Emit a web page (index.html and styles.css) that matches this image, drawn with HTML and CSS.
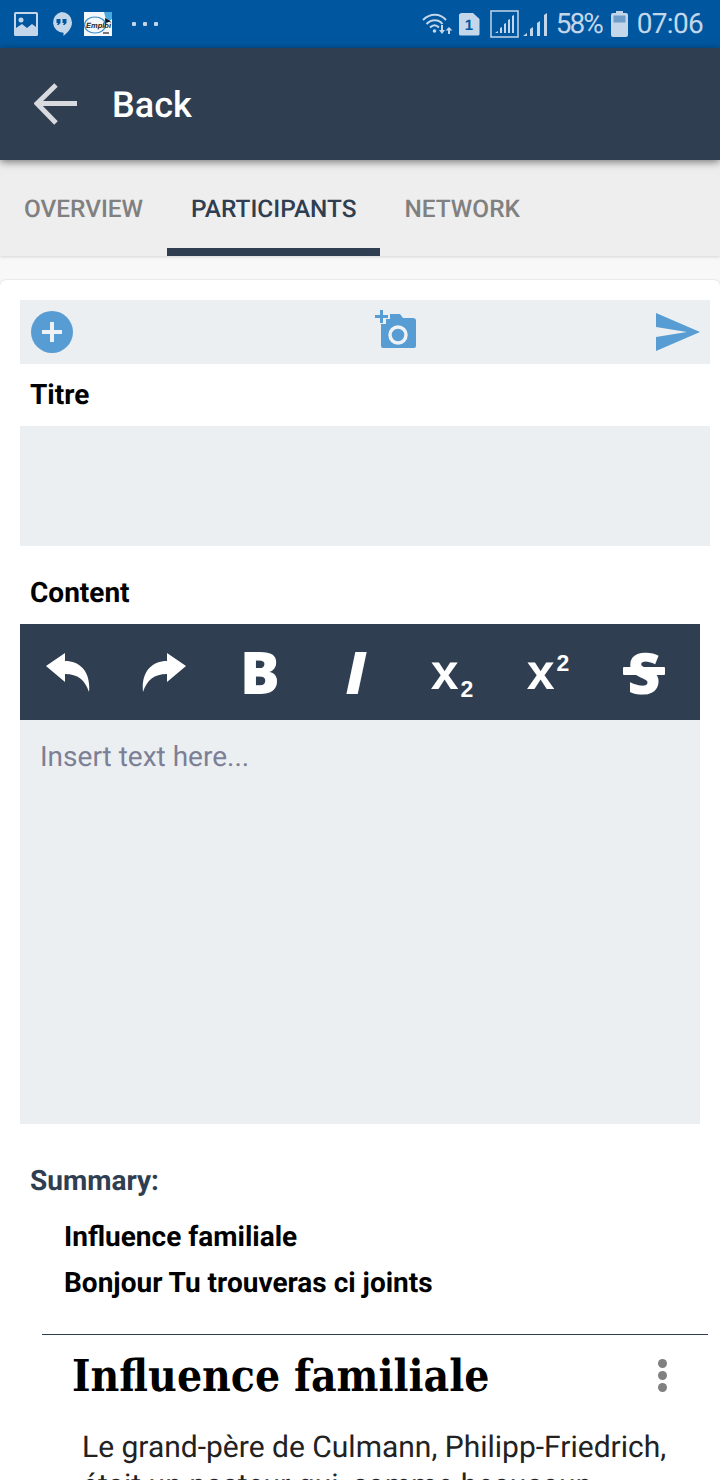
FILE: index.html
```html
<!DOCTYPE html>
<html lang="fr">
<head>
<meta charset="utf-8">
<title>Back</title>
<link rel="stylesheet" href="styles.css">
</head>
<body>
<div class="app">
  <div class="status">
    <div class="status-left">
      <svg class="s-pic" width="24" height="24" viewBox="0 0 24 24"><rect width="24" height="24" rx="1.5" fill="#c3d6ea"/><rect x="2" y="2" width="20" height="20" fill="#00579f"/><path d="M2 22v-6l6-4 5 4 5-4 4 3v7z" fill="#c3d6ea"/><circle cx="7" cy="8" r="2.5" fill="#c3d6ea"/></svg>
      <svg class="s-bub" width="21" height="24" viewBox="0 0 21 24"><path d="M10.500 0a10.500 10.500 0 0 1 10.500 10.500c0 6-5 10.500-8.500 13.500v-3.200A10.500 10.500 0 0 1 10.500 0z" fill="#c3d6ea"/><path d="M5.500 7h4v4l-2 2H6l1-2H5.500zM11.500 7h4v4l-2 2H12l1-2h-1.500z" fill="#00579f"/></svg>
      <svg class="s-logo" width="28" height="24" viewBox="0 0 28 24"><rect width="28" height="24" fill="#f4f8fb"/><path d="M20 0h8v7l-5 4z" fill="#49a8e0"/><ellipse cx="11" cy="13" rx="10.500" ry="8" fill="none" stroke="#3b8fc9" stroke-width="1.200"/><text x="2" y="16" class="logo-text">Emploi</text><path d="M21 6l6 3.500-4.500 1-1 4z" fill="#111"/><rect x="19" y="20" width="6" height="2" fill="#777"/></svg>
      <div class="s-dots"><i></i><i></i><i></i></div>
    </div>
    <div class="status-right">
      <svg width="31" height="22" viewBox="0 0 31 22"><g fill="none" stroke="#c3d6ea" stroke-width="2"><path d="M1 7c7-7 17-7 23 0"/><path d="M4.500 11c5-5 12-5 16 0"/><path d="M8 14.500c3-3 6-3 9 0"/></g><circle cx="12.500" cy="18" r="1.800" fill="#c3d6ea"/><path d="M19 12h2v5h2l-3 4-3-4h2zM27 14l3.500 3.500H28V21h-2v-3.500h-2.500z" fill="#c3d6ea"/></svg>
      <svg class="s-sim" width="21" height="24" viewBox="0 0 21 24"><path d="M2 1h12l6.500 6v15a1.500 1.500 0 0 1-1.500 1.500H1.500A1.500 1.500 0 0 1 0 22V2.500z" fill="#c3d6ea"/><text x="10" y="18" class="sim-num">1</text></svg>
      <svg class="s-net" width="29" height="28" viewBox="0 0 29 28"><rect x="1" y="1" width="27" height="26" fill="none" stroke="#c3d6ea" stroke-width="1.500"/><path d="M5 23l3-2v2zM10 23v-5l2-1v6zM14 23v-9l2-1v10zM18 23V10l2-1v14zM22 23V6l2-1v18z" fill="#c3d6ea"/></svg>
      <svg class="s-sig" width="24" height="24" viewBox="0 0 24 24"><path d="M0 24l4-3v3zM7 24v-7l3-2v9zM14 24V11l3-2v15zM21 24V3l3-2v23z" fill="#c3d6ea"/></svg>
      <span class="s-text s-pct">58%</span>
      <svg class="s-bat" width="17" height="26" viewBox="0 0 17 26"><path d="M5 0h7v2h3a2 2 0 0 1 2 2v20a2 2 0 0 1-2 2H2a2 2 0 0 1-2-2V4a2 2 0 0 1 2-2h3z" fill="#c3d6ea"/><rect x="2.500" y="4.500" width="12" height="7" fill="#6f9cc9"/></svg>
      <span class="s-text s-time">07:06</span>
    </div>
  </div>

  <header class="header">
    <svg class="back-icon" width="44" height="44" viewBox="0 0 44 44"><path d="M43 21.500H5M22 3L3 21.500 22 41" fill="none" stroke="#d8dadf" stroke-width="5"/></svg>
    <span class="back-label">Back</span>
  </header>

  <nav class="tabs">
    <a class="tab">Overview</a>
    <a class="tab tab-active">Participants</a>
    <a class="tab">Network</a>
  </nav>

  <main class="card">
    <div class="actions">
      <svg width="42" height="42" viewBox="0 0 42 42"><circle cx="21" cy="21" r="21" fill="#579cd2"/><path d="M21 11v20M11 21h20" stroke="#eef1f5" stroke-width="4"/></svg>
      <svg class="cam" width="43" height="40" viewBox="0 0 43 40"><path d="M6 14h5V9h4V4h10l3 4h10a3 3 0 0 1 3 3v25a2 2 0 0 1-2 2H8a2 2 0 0 1-2-2z" fill="#579cd2"/><path d="M5 0h3v5h5v3H8v5H5V8H0V5h5z" fill="#579cd2"/><circle cx="23" cy="25" r="8" fill="none" stroke="#eef1f5" stroke-width="3.500"/></svg>
      <svg width="44" height="38" viewBox="0 0 44 38"><path d="M0 0l44 19L0 38V24l31-5-31-5z" fill="#579cd2"/></svg>
    </div>

    <label class="field-label">Titre</label>
    <div class="title-input"></div>

    <label class="field-label content-label">Content</label>
    <div class="editor">
      <div class="editor-bar">
        <span class="tool"><svg width="44" height="40" viewBox="0 0 44 40"><path d="M0 14L19 1v8c16 0 26 12 24 31-4-12-11-18-24-18v8z" fill="#fff"/></svg></span>
        <span class="tool"><svg width="44" height="40" viewBox="0 0 44 40"><path d="M44 14L25 1v8C9 9-1 21 1 40c4-12 11-18 24-18v8z" fill="#fff"/></svg></span>
        <span class="tool tool-b">B</span>
        <span class="tool tool-i">I</span>
        <span class="tool tool-x"><span>x<sub>2</sub></span></span>
        <span class="tool tool-x"><span>x<sup>2</sup></span></span>
        <span class="tool tool-s">S</span>
      </div>
      <div class="editor-body">Insert text here...</div>
    </div>

    <h2 class="summary-title">Summary:</h2>
    <ul class="summary-list">
      <li>Influence familiale</li>
      <li>Bonjour Tu trouveras ci joints</li>
    </ul>

    <article class="article">
      <div class="article-head">
        <h1>Influence familiale</h1>
        <div class="kebab"><i></i><i></i><i></i></div>
      </div>
      <p>Le grand-père de Culmann, Philipp-Friedrich, était un pasteur qui, comme beaucoup</p>
    </article>
  </main>
</div>
</body>
</html>
```
FILE: styles.css
```css
* { box-sizing: border-box; }
html, body { margin: 0; padding: 0; }
body { font-family: Roboto, "Liberation Sans", sans-serif; background: #f8f8f8; text-rendering: geometricPrecision; }
.app { width: 720px; height: 1480px; overflow: hidden; display: flex; flex-direction: column; }

.status { height: 48px; flex: none; background: #00579f; display: flex; justify-content: space-between; align-items: center; padding: 0 17px 0 14px; }
.status-left, .status-right { display: flex; align-items: center; }
.s-bub { margin-left: 13px; }
.s-logo { margin-left: 12px; }
.logo-text { font: italic 700 7.5px "Liberation Sans", sans-serif; fill: #222; }
.s-dots { display: flex; gap: 7px; margin-left: 20px; }
.s-dots i { width: 4px; height: 4px; background: #c3d6ea; border-radius: 1px; }
.s-sim { margin-left: 6px; }
.sim-num { font: 700 15px "Liberation Sans", sans-serif; fill: #00579f; text-anchor: middle; }
.s-net { margin-left: 10px; }
.s-sig { margin-left: 4px; }
.s-text { color: #c3d6ea; font-size: 28px; line-height: 48px; letter-spacing: -.7px; }
.s-pct { margin-left: 9px; letter-spacing: -2px; }
.s-bat { margin-left: 9px; }
.s-time { margin-left: 9px; }

.header { height: 112px; flex: none; background: #2f3e50; display: flex; align-items: center; padding-left: 34px; box-shadow: 0 2px 8px rgba(0,0,0,.5); position: relative; z-index: 2; }
.back-label { color: #fff; font-size: 36px; font-weight: 500; margin-left: 34px; position: relative; top: 1px; }

.tabs { height: 96px; flex: none; background: #eeeeee; display: flex; box-shadow: 0 1px 3px rgba(0,0,0,.15); position: relative; z-index: 1; }
.tab { padding: 0 24px; line-height: 98px; font-size: 24.4px; font-weight: 500; text-transform: uppercase; color: #808080; }
.tab-active { color: #2f3e50; border-bottom: 8px solid #2f3e50; height: 96px; }

.card { margin-top: 24px; flex: 1; background: #fff; border-radius: 6px 6px 0 0; box-shadow: 0 0 2px rgba(0,0,0,.2); padding-top: 20px; overflow: hidden; }
.actions { margin: 0 10px 0 20px; height: 64px; background: #ebeff2; display: flex; justify-content: space-between; align-items: center; padding: 0 10px 0 11px; }
.cam { margin: -4px 0 0 64px; }

.field-label { display: block; margin-left: 30px; font-size: 28px; font-weight: 700; line-height: 32px; color: #000; padding-top: 15px; height: 62px; }
.title-input { margin: 0 10px 0 20px; height: 120px; background: #ebeff2; }
.content-label { height: 78px; padding-top: 31px; }

.editor { margin: 0 20px; }
.editor-bar { height: 96px; background: #2f3e50; display: flex; }
.tool { width: 96px; display: flex; justify-content: center; align-items: center; color: #fff; font-family: "Open Sans", sans-serif; font-weight: 800; }
.tool-b { font-size: 59px; line-height: 94px; }
.tool-i { font-size: 59px; font-style: italic; line-height: 94px; }
.tool-x { font-family: "Liberation Sans", sans-serif; font-weight: 700; font-size: 50px; line-height: 96px; }
.tool-x sub, .tool-x sup { font-size: 23px; line-height: 0; }
.tool-x sub { vertical-align: -8px; margin-left: 2px; }
.tool-x sup { vertical-align: 18px; margin-left: 2px; }
.tool-s { font-size: 57px; line-height: 94px; position: relative; }
.tool-s::after { content: ""; position: absolute; left: 27px; width: 42px; top: 43px; height: 8px; background: #fff; border-radius: 1px; }
.editor-body { height: 404px; background: #ebeff2; padding: 17px 20px; font-size: 28px; line-height: 40px; color: #7c7f96; }

.summary-title { margin: 41px 0 0 30px; font-size: 28px; font-weight: 700; line-height: 32px; color: #2f3e50; }
.summary-list { list-style: none; margin: 23px 0 0 64px; padding: 0; font-size: 28px; font-weight: 700; color: #000; }
.summary-list li { height: 46px; line-height: 34px; }

.article { margin: 22px 12px 0 42px; border-top: 1px solid #2f3e50; }
.article-head { display: flex; justify-content: space-between; align-items: center; padding: 8px 41px 0 30px; }
.article h1 { margin: 0; padding-top: 4px; font-family: "DejaVu Serif", serif; font-stretch: condensed; font-size: 44px; line-height: 60px; font-weight: 700; color: #000; }
.kebab { display: flex; flex-direction: column; gap: 3px; }
.kebab i { width: 9px; height: 9px; border-radius: 50%; background: #808080; }
.article p { margin: 22px 0 0 40px; font-size: 30px; line-height: 38px; color: #222; width: 620px; }
```
